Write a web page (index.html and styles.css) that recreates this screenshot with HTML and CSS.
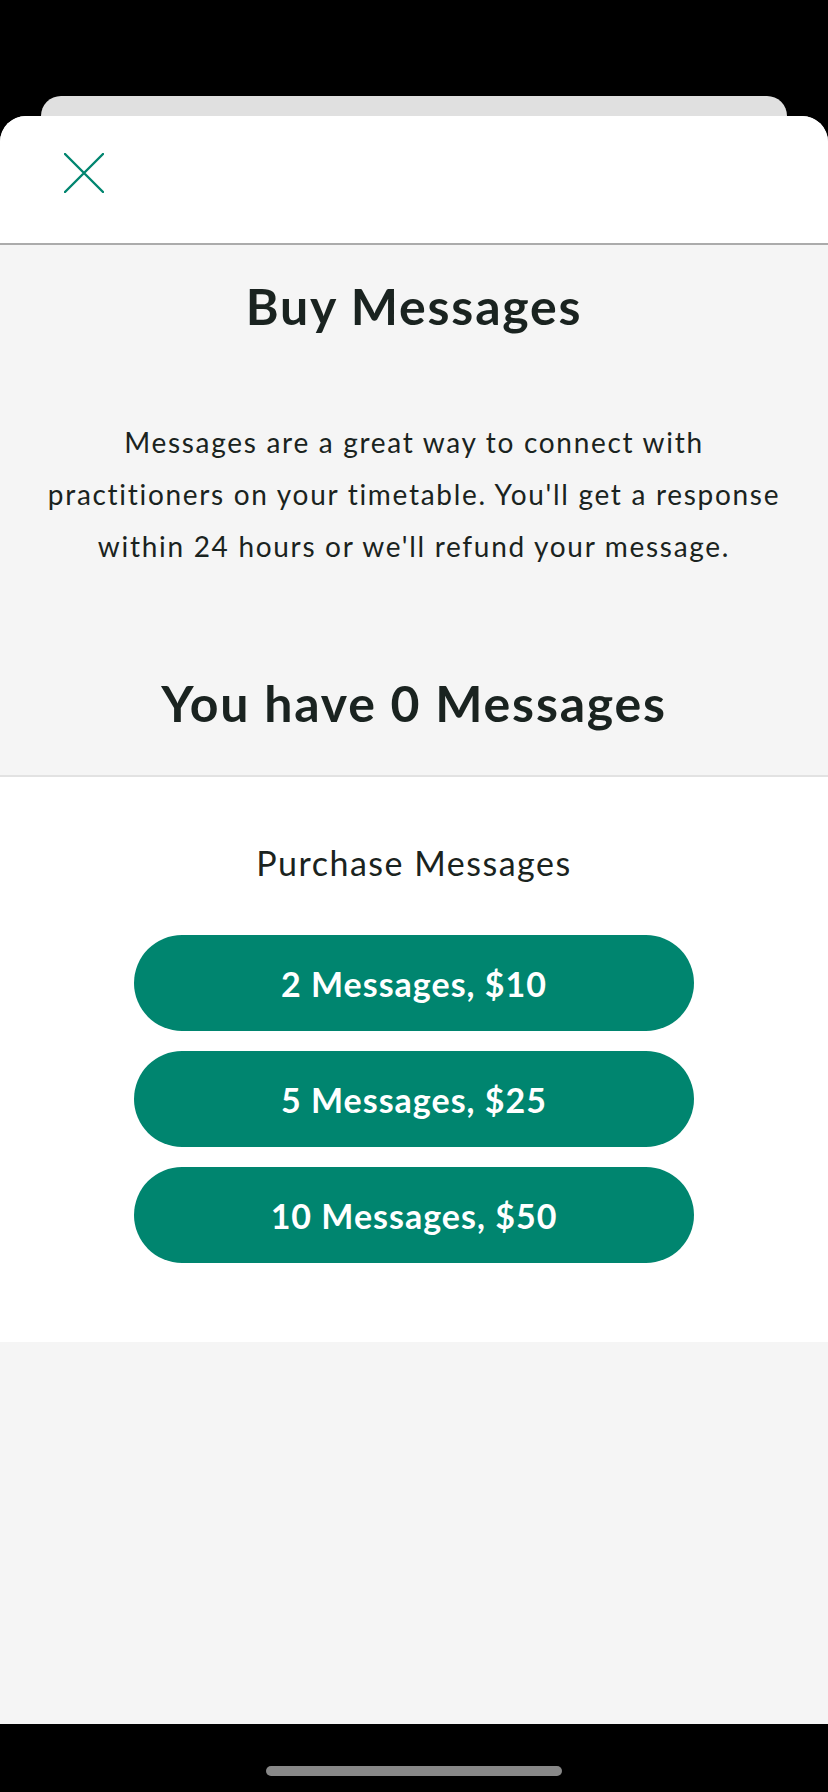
FILE: index.html
```html
<!DOCTYPE html>
<html lang="en">
<head>
<meta charset="utf-8">
<title>Buy Messages</title>
<link rel="stylesheet" href="styles.css">
</head>
<body>
<div class="status-area"></div>
<div class="back-card"></div>
<main class="sheet">
  <header class="sheet-header">
    <button class="close-btn" aria-label="Close">
      <svg width="40" height="40" viewBox="0 0 40 40"><path d="M1 1 L39 39 M39 1 L1 39" stroke="#00856f" stroke-width="2.4" stroke-linecap="round" fill="none"/></svg>
    </button>
  </header>
  <section class="intro">
    <h1 class="title">Buy Messages</h1>
    <p class="desc">Messages are a great way to connect with practitioners on your timetable. You'll get a response within 24 hours or we'll refund your message.</p>
    <h2 class="count">You have 0 Messages</h2>
  </section>
  <section class="purchase">
    <div class="purchase-label">Purchase Messages</div>
    <div class="options">
      <button class="option">2 Messages, $10</button>
      <button class="option">5 Messages, $25</button>
      <button class="option">10 Messages, $50</button>
    </div>
  </section>
  <div class="filler"></div>
</main>
<div class="home-area"><div class="home-indicator"></div></div>
</body>
</html>
```
FILE: styles.css
```css
* { box-sizing: border-box; }
html, body { margin: 0; padding: 0; }
body {
  width: 828px;
  height: 1792px;
  background: #000;
  display: flex;
  flex-direction: column;
  font-family: Lato, "Open Sans", sans-serif;
  color: #1a2320;
}
.status-area { height: 96px; flex: none; }
.back-card {
  height: 20px;
  flex: none;
  margin: 0 41px;
  background: #e0e0e0;
  border-radius: 20px 20px 0 0;
}
.sheet {
  flex: 1;
  display: flex;
  flex-direction: column;
  background: #f5f5f5;
  border-radius: 26px 26px 0 0;
  overflow: hidden;
}
.sheet-header {
  height: 129px;
  flex: none;
  background: #fff;
  border-bottom: 2px solid #ababab;
  padding: 37px 0 0 64px;
}
.close-btn {
  border: 0;
  background: none;
  padding: 0;
  width: 40px;
  height: 40px;
  display: block;
}
.close-btn svg { display: block; }
.intro {
  flex: none;
  text-align: center;
  padding: 33px 0 44px;
}
.title, .count {
  margin: 0;
  font-size: 50px;
  line-height: 56px;
  font-weight: 700;
  letter-spacing: 1.8px;
}
.desc {
  margin: 82px auto 103px;
  width: 750px;
  font-size: 28px;
  line-height: 52px;
  font-weight: 400;
  letter-spacing: 1.7px;
}
.purchase {
  flex: none;
  background: #fff;
  border-top: 2px solid #e2e2e2;
  padding: 66px 0 79px;
  display: flex;
  flex-direction: column;
  align-items: center;
}
.purchase-label {
  font-size: 34px;
  line-height: 40px;
  letter-spacing: 1.5px;
}
.options {
  margin-top: 52px;
  display: flex;
  flex-direction: column;
  gap: 20px;
}
.option {
  width: 560px;
  height: 96px;
  border: 0;
  border-radius: 48px;
  background: #00856f;
  color: #fff;
  font-family: Lato, "Open Sans", sans-serif;
  font-size: 34px;
  font-weight: 700;
  letter-spacing: 1px;
  padding: 0;
}
.filler { flex: 1; }
.home-area {
  height: 68px;
  flex: none;
  display: flex;
  justify-content: center;
  padding-top: 42px;
}
.home-indicator {
  width: 296px;
  height: 10px;
  border-radius: 5px;
  background: #888;
}
```
